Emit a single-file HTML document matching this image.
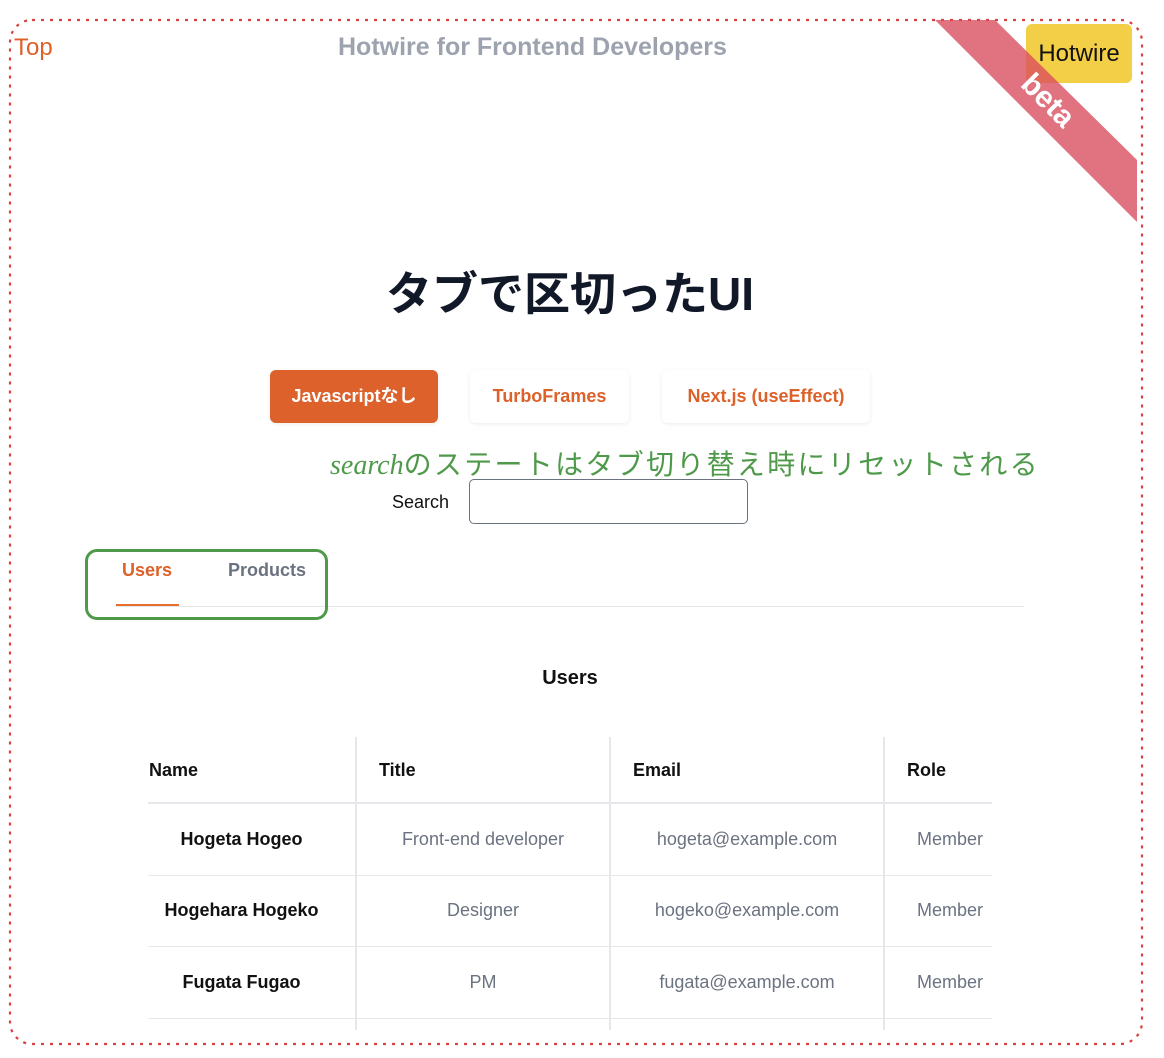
<!DOCTYPE html>
<html><head><meta charset="utf-8"><style>
body{margin:0;width:1164px;height:1058px;background:#fff;position:relative;overflow:hidden;font-family:"Liberation Sans","Noto Sans CJK JP",sans-serif}
.abs{position:absolute}
.btn{position:absolute;top:370px;height:53px;border-radius:6px;font-weight:bold;font-size:18px;line-height:53px;text-align:center;color:#dd6128;box-shadow:0 1px 4px rgba(0,0,0,.08)}
.t{position:absolute;font-size:18px;text-align:center}
.vl{position:absolute;top:737px;height:293px;width:2px;background:#e5e7eb}
.hl{position:absolute;left:148px;width:844px;height:1px;background:#e5e7eb}
</style></head><body>
<svg class="abs" style="left:0;top:0" width="1164" height="1058"><rect x="10" y="20" width="1132" height="1024" rx="22" fill="none" stroke="#d9413e" stroke-width="2.2" stroke-dasharray="3 6"/></svg>
<div class="abs" style="left:14px;top:34px;font-size:24px;color:#dd6128">Top</div>
<div class="abs" style="left:338px;top:33px;font-size:25px;font-weight:bold;color:#9ca3af">Hotwire for Frontend Developers</div>
<div class="abs" style="left:1026px;top:24px;width:106px;height:59px;background:#f3cf48;border-radius:6px;font-size:24px;line-height:59px;text-align:center;color:#111">Hotwire</div>
<svg class="abs" style="left:0;top:0" width="1164" height="260"><polygon points="935,20 995,20 1137,160 1137,222" fill="#d94a5c" fill-opacity=".78"/></svg>
<div class="abs" style="left:1000px;top:84px;width:95px;text-align:center;transform:rotate(45deg);color:#fff;font-weight:bold;font-size:30px">beta</div>
<div class="abs" style="left:0;width:1140px;top:258px;text-align:center;font-size:46px;font-weight:bold;color:#111827">タブで区切ったUI</div>
<div class="btn" style="left:270px;width:168px;background:#dc612b;color:#fff">Javascriptなし</div>
<div class="btn" style="left:470px;width:159px;background:#fff">TurboFrames</div>
<div class="btn" style="left:662px;width:208px;background:#fff">Next.js (useEffect)</div>
<div class="abs" style="left:330px;top:443px;font-size:28px;color:#4f9a4a;white-space:nowrap;letter-spacing:2.3px"><span style="font-family:'Liberation Serif',serif;font-style:italic;letter-spacing:0">search</span>のステートはタブ切り替え時にリセットされる</div>
<div class="abs" style="left:392px;top:492px;font-size:18px;color:#111">Search</div>
<div class="abs" style="left:469px;top:479px;width:279px;height:45px;border:1.5px solid #6b7280;border-radius:5px;box-sizing:border-box"></div>
<div class="abs" style="left:122px;top:560px;font-size:18px;font-weight:bold;color:#dd6128">Users</div>
<div class="abs" style="left:228px;top:560px;font-size:18px;font-weight:bold;color:#6b7280">Products</div>
<div class="abs" style="left:116px;top:604px;width:63px;height:3px;background:#e86f2c"></div>
<div class="abs" style="left:116px;top:606px;width:908px;height:1px;background:#e5e7eb"></div>
<div class="abs" style="left:85px;top:549px;width:243px;height:71px;border:3px solid #4f9a4a;border-radius:12px;box-sizing:border-box"></div>
<div class="abs" style="left:0;width:1140px;top:667px;text-align:center;font-size:20px;font-weight:bold;color:#111">Users</div>
<div class="vl" style="left:355px"></div><div class="vl" style="left:609px"></div><div class="vl" style="left:883px"></div>
<div class="hl" style="top:802px;height:2px"></div><div class="hl" style="top:875px"></div><div class="hl" style="top:946px"></div><div class="hl" style="top:1018px"></div>
<div class="t" style="left:149px;top:760px;font-weight:bold;color:#111">Name</div>
<div class="t" style="left:379px;top:760px;font-weight:bold;color:#111">Title</div>
<div class="t" style="left:633px;top:760px;font-weight:bold;color:#111">Email</div>
<div class="t" style="left:907px;top:760px;font-weight:bold;color:#111">Role</div>
<div class="t" style="left:138px;width:207px;top:829px;font-weight:bold;color:#111">Hogeta Hogeo</div>
<div class="t" style="left:357px;width:252px;top:829px;color:#6b7280">Front-end developer</div>
<div class="t" style="left:611px;width:272px;top:829px;color:#6b7280">hogeta@example.com</div>
<div class="t" style="left:885px;width:130px;top:829px;color:#6b7280">Member</div>
<div class="t" style="left:138px;width:207px;top:900px;font-weight:bold;color:#111">Hogehara Hogeko</div>
<div class="t" style="left:357px;width:252px;top:900px;color:#6b7280">Designer</div>
<div class="t" style="left:611px;width:272px;top:900px;color:#6b7280">hogeko@example.com</div>
<div class="t" style="left:885px;width:130px;top:900px;color:#6b7280">Member</div>
<div class="t" style="left:138px;width:207px;top:972px;font-weight:bold;color:#111">Fugata Fugao</div>
<div class="t" style="left:357px;width:252px;top:972px;color:#6b7280">PM</div>
<div class="t" style="left:611px;width:272px;top:972px;color:#6b7280">fugata@example.com</div>
<div class="t" style="left:885px;width:130px;top:972px;color:#6b7280">Member</div>
</body></html>
